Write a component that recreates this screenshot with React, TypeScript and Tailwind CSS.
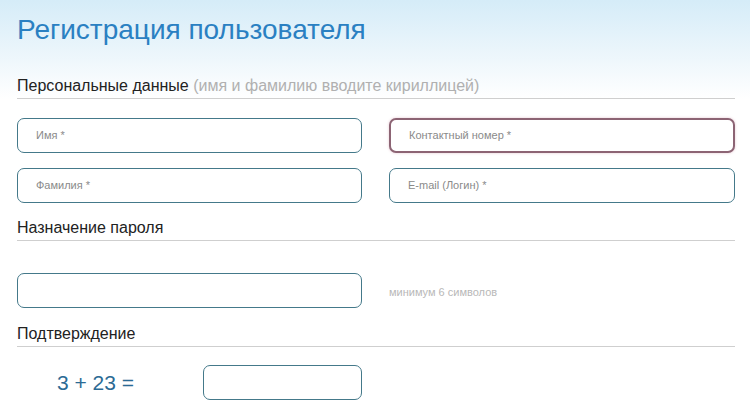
export default function App() {
  return (
    <div className="w-[750px] h-[409px] overflow-hidden bg-white font-['Liberation_Sans',Arial,sans-serif]">
      <div className="bg-gradient-to-b from-[#d5ecf8] via-[#eaf5fb] to-white px-[17px] pt-[14px]">
        <h1 className="text-[28px] leading-[32px] text-[#2a80c2]">Регистрация пользователя</h1>

        <div className="mt-[30px] border-b border-[#cfcfcf] w-[718px] pb-[2px] text-[16px] leading-[20px] text-[#222]">
          Персональные данные <span className="text-[#b0b0b0]">(имя и фамилию вводите кириллицей)</span>
        </div>
      </div>

      <div className="px-[17px]">
        <div className="grid grid-cols-[345px_346px] gap-x-[27px] gap-y-[15px] mt-[19px]">
          <Field placeholder="Имя *" />
          <Field placeholder="Контактный номер *" active />
          <Field placeholder="Фамилия *" />
          <Field placeholder="E-mail (Логин) *" />
        </div>

        <div className="mt-[15px] border-b border-[#cfcfcf] w-[718px] pb-[2px] text-[16px] leading-[20px] text-[#222]">
          Назначение пароля
        </div>

        <div className="flex items-center mt-[32px]">
          <Field placeholder="" className="w-[345px]" />
          <span className="ml-[27px] mt-[4px] text-[11px] text-[#b8b8b8]">минимум 6 символов</span>
        </div>

        <div className="mt-[16px] border-b border-[#cfcfcf] w-[718px] pb-[2px] text-[16px] leading-[20px] text-[#222]">
          Подтверждение
        </div>

        <div className="flex items-center mt-[18px]">
          <span className="w-[186px] pl-[40px] text-[21px] text-[#2b6a94]">3 + 23 =</span>
          <Field placeholder="" className="w-[159px]" />
        </div>
      </div>
    </div>
  );
}

function Field({ placeholder, active, className }: { placeholder: string; active?: boolean; className?: string }) {
  return (
    <div
      className={`h-[35px] rounded-[7px] bg-white flex items-center pl-[18px] text-[11px] text-[#8a8a8a] ${
        active ? "border-2 border-[#8c6474] shadow-[0_0_3px_#e6c8d2]" : "border border-[#44798a]"
      } ${className ?? ""}`}
    >
      {placeholder}
    </div>
  );
}
